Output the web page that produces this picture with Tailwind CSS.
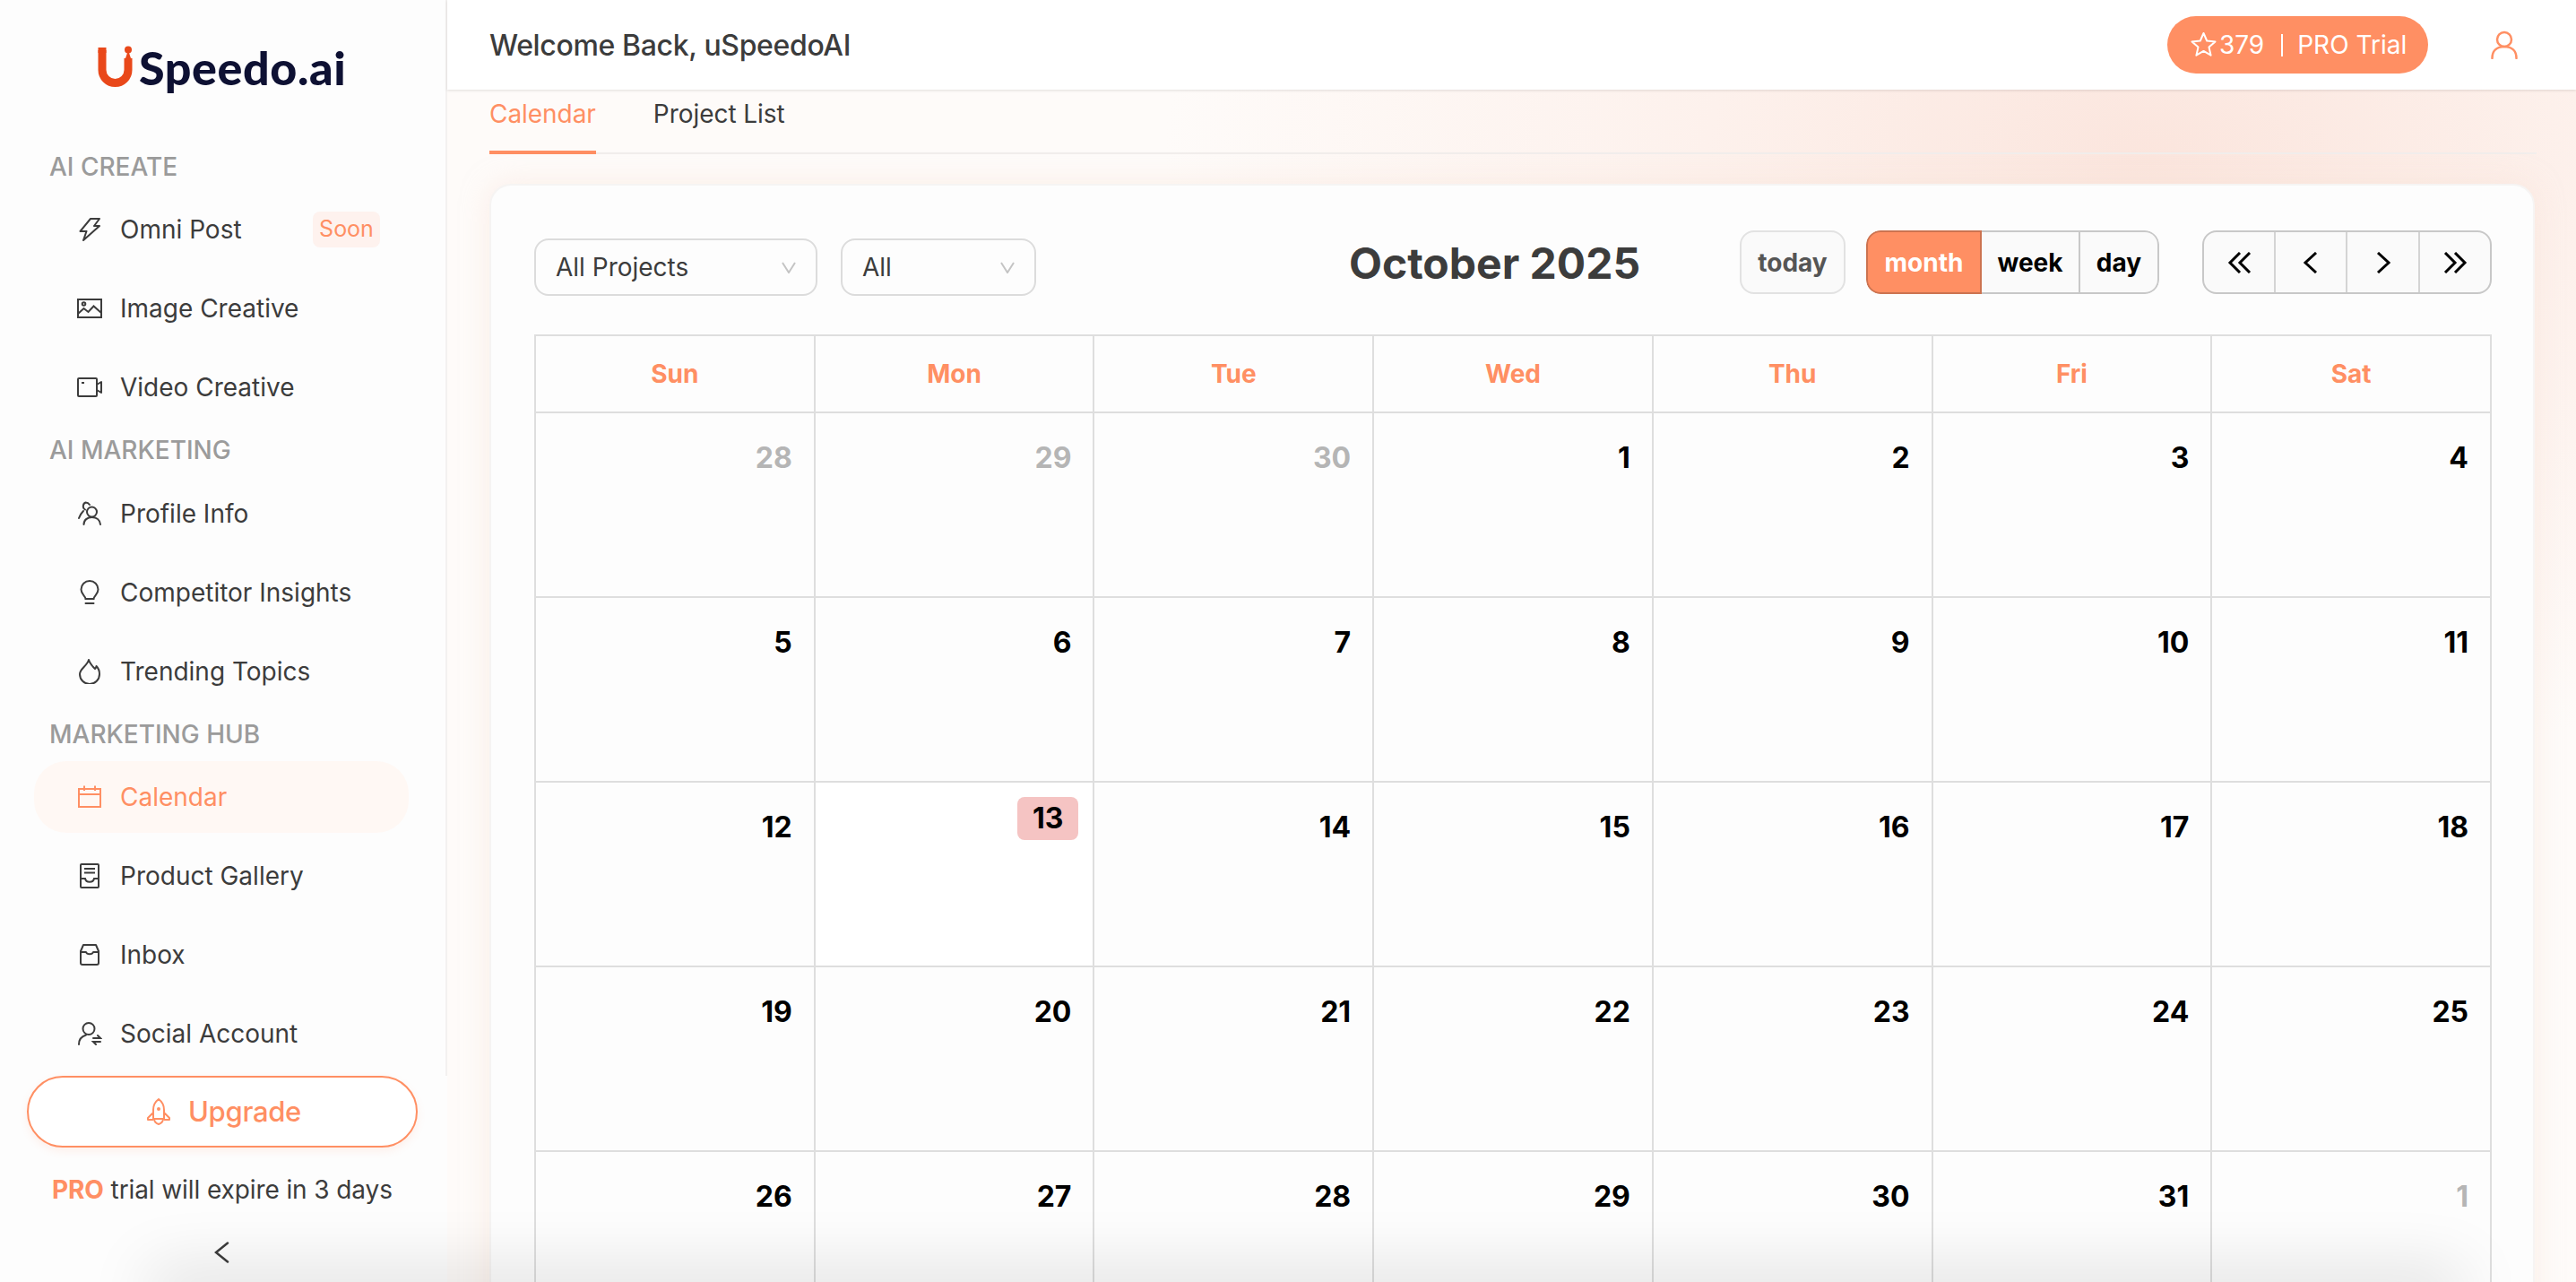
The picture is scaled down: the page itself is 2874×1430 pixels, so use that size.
<!DOCTYPE html>
<html lang="en">
<head>
    <meta charset="UTF-8">
    <meta name="viewport" content="width=device-width, initial-scale=1.0">
    <title>uSpeedo.ai Calendar</title>
    <script src="https://cdn.jsdelivr.net/npm/@tailwindcss/browser@4"></script>
</head>
<body class="bg-white">
<div class="relative flex h-[1430px] w-[2874px] overflow-hidden font-[Inter,sans-serif] text-[#3c3c3c]">

    <!-- Sidebar -->
    <aside class="flex w-[499px] shrink-0 flex-col bg-[#fdfdfd]">
        <div class="h-[1200px] border-r-2 border-[#f3f1f0]">
            <div class="flex h-[150px] items-start pl-[109px] pt-[51px]">
                <svg class="h-[49px] w-[40px] shrink-0" viewBox="0 0 40 49" fill="none">
                    <path d="M5 5v22a14.500 14.500 0 0 0 29 0V14" stroke="#e9481a" stroke-width="9"/>
                    <path d="M5 2v6" stroke="#e9481a" stroke-width="9"/>
                    <circle cx="34" cy="4.500" r="4" fill="#e9481a"/>
                    <path d="M33 8h2l2 6h-6z" fill="#e9481a"/>
                </svg>
                <span class="ml-[6px] mt-[-6px] font-[Lato,sans-serif] text-[52px] leading-[60px] font-black tracking-[0.6px] text-[#0e1133]">Speedo.ai</span>
            </div>

            <p class="ml-[55px] mt-[19px] text-[28px] leading-[34px] font-medium text-[#9b9b9b]">AI CREATE</p>
            <nav class="mt-[9px]">
                <a class="flex h-[88px] items-center pl-[86px] text-[28px]">
                    <svg class="h-7 w-7 shrink-0" viewBox="0 0 28 28" fill="none" stroke="currentColor" stroke-width="2" stroke-linejoin="round"><path d="M15 2h10l-6 8h6L7 26l3.500-10H3.500z"/></svg>
                    <span class="ml-[20px] flex-1">Omni Post</span>
                    <span class="mr-[73px] flex h-[40px] w-[75px] items-center justify-center rounded-lg bg-[#fef2ee] text-[25px] text-[#ff8f63]">Soon</span>
                </a>
                <a class="flex h-[88px] items-center pl-[86px] text-[28px]">
                    <svg class="h-7 w-7 shrink-0" viewBox="0 0 28 28" fill="none" stroke="currentColor" stroke-width="2"><rect x="1" y="4" width="26" height="20"/><circle cx="7.500" cy="9" r="1.800"/><path d="M1 20l6.500-6 5 4 6-6.500L27 19"/></svg>
                    <span class="ml-[20px]">Image Creative</span>
                </a>
                <a class="flex h-[88px] items-center pl-[86px] text-[28px]">
                    <svg class="h-7 w-7 shrink-0" viewBox="0 0 28 28" fill="none" stroke="currentColor" stroke-width="2" stroke-linejoin="round"><rect x="1" y="4" width="21" height="20" rx="1"/><path d="M22 11l5-3v12l-5-3M5 9h3"/></svg>
                    <span class="ml-[20px]">Video Creative</span>
                </a>
            </nav>

            <p class="ml-[55px] mt-[9px] text-[28px] leading-[34px] font-medium text-[#9b9b9b]">AI MARKETING</p>
            <nav class="mt-[10px]">
                <a class="flex h-[88px] items-center pl-[86px] text-[28px]">
                    <svg class="h-7 w-7 shrink-0" viewBox="0 0 28 28" fill="none" stroke="currentColor" stroke-width="2" stroke-linecap="round"><circle cx="16.500" cy="12" r="5.500"/><path d="M7.500 26c0-5 4-8 9-8s9 3 9.500 8M9 9.500A4.500 4.500 0 0 1 9.500 1.500c2 0 3.500 1 4.500 2.500M7 11c-2 2-4 5-5 8"/></svg>
                    <span class="ml-[20px]">Profile Info</span>
                </a>
                <a class="flex h-[88px] items-center pl-[86px] text-[28px]">
                    <svg class="h-7 w-7 shrink-0" viewBox="0 0 28 28" fill="none" stroke="currentColor" stroke-width="2" stroke-linecap="round"><path d="M9.500 21c0-3-5-5-5-10.500a9.500 9.500 0 0 1 19 0C23.500 16 18.500 18 18.500 21zM9.500 26h9"/></svg>
                    <span class="ml-[20px]">Competitor Insights</span>
                </a>
                <a class="flex h-[88px] items-center pl-[86px] text-[28px]">
                    <svg class="h-7 w-7 shrink-0" viewBox="0 0 28 28" fill="none" stroke="currentColor" stroke-width="2" stroke-linejoin="round"><path d="M13 1c1 4 3 5 5 8l2 2c1-1 1.500-2 1.500-3 3 3 3.500 6 3.500 9a11 11 0 0 1-22 0C3 11 11 8 13 1z"/></svg>
                    <span class="ml-[20px]">Trending Topics</span>
                </a>
            </nav>

            <p class="ml-[55px] mt-[9px] text-[28px] leading-[34px] font-medium text-[#9b9b9b]">MARKETING HUB</p>
            <nav class="mt-[13px]">
                <a class="ml-[38px] flex h-[80px] w-[418px] items-center rounded-[36px] bg-[#fff8f4] pl-[48px] text-[28px] text-[#ff8f63]">
                    <svg class="h-7 w-7 shrink-0" viewBox="0 0 28 28" fill="none" stroke="currentColor" stroke-width="2"><rect x="2" y="5" width="24" height="20"/><path d="M2 11h24M8 1.500V7M20 1.500V7"/></svg>
                    <span class="ml-[20px]">Calendar</span>
                </a>
                <a class="mt-[4px] flex h-[88px] items-center pl-[86px] text-[28px]">
                    <svg class="h-7 w-7 shrink-0" viewBox="0 0 28 28" fill="none" stroke="currentColor" stroke-width="2"><rect x="4" y="1" width="20" height="26" rx="1"/><path d="M8 6h12M8 10.500h12M4 17h5c1 5 9 5 10 0h5"/></svg>
                    <span class="ml-[20px]">Product Gallery</span>
                </a>
                <a class="flex h-[88px] items-center pl-[86px] text-[28px]">
                    <svg class="h-7 w-7 shrink-0" viewBox="0 0 28 28" fill="none" stroke="currentColor" stroke-width="2" stroke-linejoin="round"><path d="M4 10l3-7h14l3 7v13a2 2 0 0 1-2 2H6a2 2 0 0 1-2-2zM4 11h6c1 3 7 3 8 0h6"/></svg>
                    <span class="ml-[20px]">Inbox</span>
                </a>
                <a class="flex h-[88px] items-center pl-[86px] text-[28px]">
                    <svg class="h-7 w-7 shrink-0" viewBox="0 0 28 28" fill="none" stroke="currentColor" stroke-width="2" stroke-linecap="round"><circle cx="13" cy="8.500" r="6.500"/><path d="M2 26c0-5 3-9 8-10.500M18 19h8l-3-3M26 23h-8l3 3"/></svg>
                    <span class="ml-[20px]">Social Account</span>
                </a>
            </nav>
        </div>

        <div class="flex-1">
            <button class="ml-[30px] flex h-[80px] w-[436px] items-center justify-center rounded-full border-2 border-[#ff8f63] bg-white pl-[3px] text-[31px] font-medium tracking-[-0.3px] text-[#ff8f63] shadow-[0_4px_10px_rgba(255,143,99,0.12)]">
                <svg class="mr-[19px] h-[32px] w-[28px] shrink-0" viewBox="0 0 28 32" fill="none" stroke="currentColor" stroke-width="2" stroke-linejoin="round"><path d="M14 2c4 3 6 7 6 12v10H8V14c0-5 2-9 6-12zM8 17l-6 6v2h6M20 17l6 6v2h-6M9 24c0 3 2 5 5 6 3-1 5-3 5-6"/><circle cx="14" cy="13" r="1" fill="currentColor"/></svg>
                Upgrade
            </button>
            <p class="ml-[58px] mt-[30px] text-[28px] leading-[34px] tracking-[-0.1px]"><span class="font-bold text-[#ff8f63]">PRO</span> trial will expire in 3 days</p>
            <svg class="ml-[239px] mt-[41px] h-[24px] w-[17px]" viewBox="0 0 17 24" fill="none" stroke="#3c3c3c" stroke-width="2.500" stroke-linecap="round"><path d="M15 1.500L2 12l13 10.500"/></svg>
        </div>
    </aside>

    <!-- Main -->
    <main class="flex min-w-0 flex-1 flex-col bg-[radial-gradient(ellipse_1100px_700px_at_1900px_180px,#fbe5dd_0%,#fdf1ec_45%,#fefbf9_100%)]">
        <header class="z-10 flex h-[100px] shrink-0 items-center bg-white pl-[47px] pr-[65px] shadow-[0_1px_3px_rgba(0,0,0,0.12)]">
            <h1 class="mt-[2px] flex-1 text-[32px] font-medium tracking-[-0.35px]">Welcome Back, uSpeedoAI</h1>
            <div class="flex h-[64px] w-[291px] items-center rounded-full bg-[#ff8f63] pl-[26px] text-[28px] text-white">
                <svg class="h-[30px] w-[29px] shrink-0" viewBox="0 0 29 30" fill="none" stroke="currentColor" stroke-width="2" stroke-linejoin="round"><path d="M14.500 2l3.700 8.500 9.300.9-7 6.200 2.100 9.100-8.100-4.800-8.100 4.800 2.100-9.100-7-6.200 9.300-.9z"/></svg>
                <span class="ml-[3px]">379</span>
                <span class="ml-[19px] h-[25px] w-[2px] bg-white"></span>
                <span class="ml-[16px]">PRO Trial</span>
            </div>
            <svg class="ml-[70px] h-[32px] w-[30px] shrink-0" viewBox="0 0 30 32" fill="none" stroke="#ff8f63" stroke-width="2.500" stroke-linecap="round"><circle cx="15" cy="10" r="8"/><path d="M1.500 31c0-8 5-13 13.500-13s13.500 5 13.500 13"/></svg>
        </header>

        <div class="ml-[47px] mr-[44px] flex h-[72px] shrink-0 items-start gap-[64px] border-b-2 border-[#f2eeec] text-[28px] tracking-[-0.05px]">
            <a class="h-[72px] border-b-4 border-[#ff8f63] pt-[10px] leading-[34px] text-[#ff8f63]">Calendar</a>
            <a class="pt-[10px] leading-[34px]">Project List</a>
        </div>

        <!-- Calendar card -->
        <section class="ml-[47px] mt-[33px] w-[2282px] flex-1 rounded-t-[24px] border-2 border-b-0 border-[#f6f4f3] bg-[#fdfdfd] pl-[48px] pt-[50px] shadow-[0_0_30px_rgba(250,225,214,0.5)]">
            <div class="flex h-[108px] w-[2184px] items-start">
                <div class="mt-[9px] flex h-[64px] w-[316px] shrink-0 items-center justify-between rounded-2xl border-2 border-[#dcdcdc] pl-[22px] pr-[22px] text-[28px]">
                    All Projects
                    <svg class="h-[13px] w-[16px]" viewBox="0 0 16 13" fill="none" stroke="#c4c4c4" stroke-width="2"><path d="M1 1l7 11 7-11"/></svg>
                </div>
                <div class="ml-[26px] mt-[9px] flex h-[64px] w-[218px] shrink-0 items-center justify-between rounded-2xl border-2 border-[#dcdcdc] pl-[22px] pr-[22px] text-[28px]">
                    All
                    <svg class="h-[13px] w-[16px]" viewBox="0 0 16 13" fill="none" stroke="#c4c4c4" stroke-width="2"><path d="M1 1l7 11 7-11"/></svg>
                </div>
                <h2 class="ml-[349px] mt-[13px] w-[436px] shrink-0 text-[48px] leading-[48px] font-bold whitespace-nowrap">October 2025</h2>
                <button class="flex h-[71px] w-[118px] shrink-0 items-center justify-center rounded-2xl border-2 border-[#e2e2e2] bg-[#fafafa] text-[28px] font-bold text-[#555555]">today</button>
                <div class="ml-[23px] flex h-[71px] shrink-0 overflow-hidden rounded-2xl text-[28px] font-bold text-black">
                    <button class="w-[129px] rounded-l-2xl border-2 border-[#cc7350] bg-[#ff8f63] text-white">month</button>
                    <button class="w-[110px] border-y-2 border-r-2 border-[#c8c8c8] bg-[#fafafa]">week</button>
                    <button class="w-[88px] rounded-r-2xl border-y-2 border-r-2 border-[#c8c8c8] bg-[#fafafa]">day</button>
                </div>
                <div class="ml-[48px] flex h-[71px] shrink-0 overflow-hidden rounded-2xl border-2 border-[#c8c8c8] bg-[#fafafa]">
                    <button class="flex w-[80px] items-center justify-center border-r-2 border-[#d4d4d4]">
                        <svg class="h-[24px] w-[27px]" viewBox="0 0 27 24" fill="none" stroke="#000" stroke-width="3"><path d="M14 1L3 12l11 11M25 1L14 12l11 11"/></svg>
                    </button>
                    <button class="flex w-[80px] items-center justify-center border-r-2 border-[#d4d4d4]">
                        <svg class="h-[24px] w-[18px]" viewBox="0 0 18 24" fill="none" stroke="#000" stroke-width="3"><path d="M15 1L3 12l12 11"/></svg>
                    </button>
                    <button class="flex w-[81px] items-center justify-center border-r-2 border-[#d4d4d4]">
                        <svg class="h-[24px] w-[18px]" viewBox="0 0 18 24" fill="none" stroke="#000" stroke-width="3"><path d="M3 1l12 11L3 23"/></svg>
                    </button>
                    <button class="flex w-[78px] items-center justify-center">
                        <svg class="h-[24px] w-[27px]" viewBox="0 0 27 24" fill="none" stroke="#000" stroke-width="3"><path d="M2 1l11 11L2 23M13 1l11 11-11 11"/></svg>
                    </button>
                </div>
            </div>

            <!-- Month grid -->
            <div class="mt-[8px] w-[2184px] border-l-2 border-t-2 border-[#dedede]">
                <div class="grid h-[86px] grid-cols-7 text-center text-[28px] font-bold text-[#ff8f63]">
                    <div class="flex items-center justify-center border-b-2 border-r-2 border-[#dedede]">Sun</div>
                    <div class="flex items-center justify-center border-b-2 border-r-2 border-[#dedede]">Mon</div>
                    <div class="flex items-center justify-center border-b-2 border-r-2 border-[#dedede]">Tue</div>
                    <div class="flex items-center justify-center border-b-2 border-r-2 border-[#dedede]">Wed</div>
                    <div class="flex items-center justify-center border-b-2 border-r-2 border-[#dedede]">Thu</div>
                    <div class="flex items-center justify-center border-b-2 border-r-2 border-[#dedede]">Fri</div>
                    <div class="flex items-center justify-center border-b-2 border-r-2 border-[#dedede]">Sat</div>
                </div>
                <div class="grid grid-cols-7 auto-rows-[206px] text-right text-[32px] leading-[36px] font-bold text-black">
                    <div class="border-b-2 border-r-2 border-[#dedede] pr-[24px] pt-[32px] text-[#b5b5b5]">28</div>
                    <div class="border-b-2 border-r-2 border-[#dedede] pr-[24px] pt-[32px] text-[#b5b5b5]">29</div>
                    <div class="border-b-2 border-r-2 border-[#dedede] pr-[24px] pt-[32px] text-[#b5b5b5]">30</div>
                    <div class="border-b-2 border-r-2 border-[#dedede] pr-[24px] pt-[32px]">1</div>
                    <div class="border-b-2 border-r-2 border-[#dedede] pr-[24px] pt-[32px]">2</div>
                    <div class="border-b-2 border-r-2 border-[#dedede] pr-[24px] pt-[32px]">3</div>
                    <div class="border-b-2 border-r-2 border-[#dedede] pr-[24px] pt-[32px]">4</div>

                    <div class="border-b-2 border-r-2 border-[#dedede] pr-[24px] pt-[32px]">5</div>
                    <div class="border-b-2 border-r-2 border-[#dedede] pr-[24px] pt-[32px]">6</div>
                    <div class="border-b-2 border-r-2 border-[#dedede] pr-[24px] pt-[32px]">7</div>
                    <div class="border-b-2 border-r-2 border-[#dedede] pr-[24px] pt-[32px]">8</div>
                    <div class="border-b-2 border-r-2 border-[#dedede] pr-[24px] pt-[32px]">9</div>
                    <div class="border-b-2 border-r-2 border-[#dedede] pr-[24px] pt-[32px]">10</div>
                    <div class="border-b-2 border-r-2 border-[#dedede] pr-[24px] pt-[32px]">11</div>

                    <div class="border-b-2 border-r-2 border-[#dedede] pr-[24px] pt-[32px]">12</div>
                    <div class="border-b-2 border-r-2 border-[#dedede] bg-white pr-[16px] pt-[16px]"><span class="inline-block h-[48px] rounded-lg bg-[#f5c4c3] px-[17px] leading-[48px]">13</span></div>
                    <div class="border-b-2 border-r-2 border-[#dedede] pr-[24px] pt-[32px]">14</div>
                    <div class="border-b-2 border-r-2 border-[#dedede] pr-[24px] pt-[32px]">15</div>
                    <div class="border-b-2 border-r-2 border-[#dedede] pr-[24px] pt-[32px]">16</div>
                    <div class="border-b-2 border-r-2 border-[#dedede] pr-[24px] pt-[32px]">17</div>
                    <div class="border-b-2 border-r-2 border-[#dedede] pr-[24px] pt-[32px]">18</div>

                    <div class="border-b-2 border-r-2 border-[#dedede] pr-[24px] pt-[32px]">19</div>
                    <div class="border-b-2 border-r-2 border-[#dedede] pr-[24px] pt-[32px]">20</div>
                    <div class="border-b-2 border-r-2 border-[#dedede] pr-[24px] pt-[32px]">21</div>
                    <div class="border-b-2 border-r-2 border-[#dedede] pr-[24px] pt-[32px]">22</div>
                    <div class="border-b-2 border-r-2 border-[#dedede] pr-[24px] pt-[32px]">23</div>
                    <div class="border-b-2 border-r-2 border-[#dedede] pr-[24px] pt-[32px]">24</div>
                    <div class="border-b-2 border-r-2 border-[#dedede] pr-[24px] pt-[32px]">25</div>

                    <div class="border-b-2 border-r-2 border-[#dedede] pr-[24px] pt-[32px]">26</div>
                    <div class="border-b-2 border-r-2 border-[#dedede] pr-[24px] pt-[32px]">27</div>
                    <div class="border-b-2 border-r-2 border-[#dedede] pr-[24px] pt-[32px]">28</div>
                    <div class="border-b-2 border-r-2 border-[#dedede] pr-[24px] pt-[32px]">29</div>
                    <div class="border-b-2 border-r-2 border-[#dedede] pr-[24px] pt-[32px]">30</div>
                    <div class="border-b-2 border-r-2 border-[#dedede] pr-[24px] pt-[32px]">31</div>
                    <div class="border-b-2 border-r-2 border-[#dedede] pr-[24px] pt-[32px] text-[#b5b5b5]">1</div>
                </div>
            </div>
        </section>
    </main>

    <!-- Soft shadow rising from below the bottom edge -->
    <div class="pointer-events-none absolute -bottom-[20px] left-[180px] right-[140px] h-[20px] shadow-[0_0_70px_14px_rgba(0,0,0,0.13)]"></div>
</div>
</body>
</html>
